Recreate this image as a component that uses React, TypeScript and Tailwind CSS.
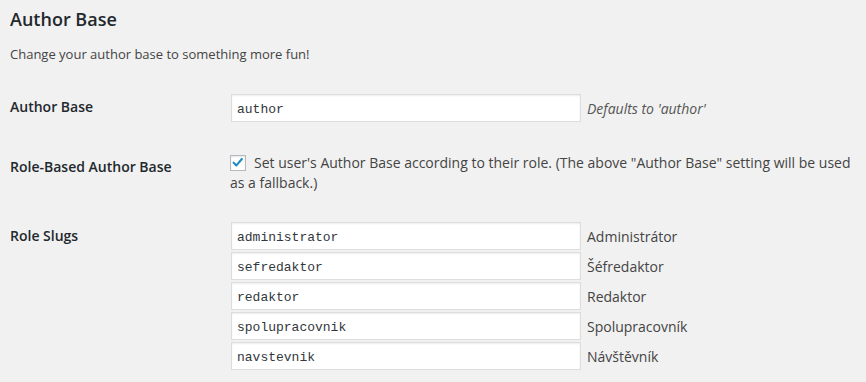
import React from 'react';

const slugs = [
  { slug: 'administrator', label: 'Administrátor' },
  { slug: 'sefredaktor', label: 'Šéfredaktor' },
  { slug: 'redaktor', label: 'Redaktor' },
  { slug: 'spolupracovnik', label: 'Spolupracovník' },
  { slug: 'navstevnik', label: 'Návštěvník' },
];

const TextInput = ({ value }: { value: string }) => (
  <input
    type="text"
    defaultValue={value}
    className="w-[350px] h-[28px] shrink-0 bg-white border border-[#ddd] shadow-[inset_0_1px_2px_rgba(0,0,0,0.07)] px-[5px] pt-[3px] text-[13px] leading-[22px] text-[#32373c] font-['Liberation_Mono',monospace] outline-none"
  />
);

export default function App() {
  return (
    <div className="min-h-[382px] w-full bg-[#f1f1f1] pl-[10px] pr-[10px] pt-[7px] font-['Open_Sans',sans-serif] text-[14px] text-[#444]">
      <h2 className="text-[18px] leading-[24px] font-semibold text-[#23282d]">Author Base</h2>
      <p className="mt-[14px] text-[13px] leading-[19.5px] text-[#444]">Change your author base to something more fun!</p>

      <div className="mt-[29px] flex flex-col">
        {/* Author Base */}
        <div className="flex">
          <div className="w-[221px] shrink-0 pt-[4px] leading-[18.2px] font-semibold text-[#23282d]">Author Base</div>
          <div className="flex h-[28px] items-center gap-[6px]">
            <TextInput value="author" />
            <span className="pt-[2px] leading-[20px] italic text-[#555]">Defaults to 'author'</span>
          </div>
        </div>

        {/* Role-Based Author Base */}
        <div className="mt-[31px] flex">
          <div className="w-[220px] shrink-0 pt-[5px] leading-[18.2px] font-semibold text-[#23282d]">Role-Based Author Base</div>
          <label className="block flex-1 leading-[20px] text-[#444]">
            <span className="inline-block align-[-3px] w-[16px] h-[16px] mr-[8px] bg-white border border-[#b4b9be] shadow-[inset_0_1px_2px_rgba(0,0,0,0.1)] relative">
              <svg viewBox="0 0 16 16" className="absolute left-[0px] top-[0px] w-[14px] h-[14px]">
                <path d="M3 7.6 L6.2 10.8 L12.4 3.4" fill="none" stroke="#1e8cbe" strokeWidth="2.4" strokeLinecap="round" strokeLinejoin="round" />
              </svg>
            </span>
            Set user's Author Base according to their role. (The above "Author Base" setting will be used as a fallback.)
          </label>
        </div>

        {/* Role Slugs */}
        <div className="mt-[29px] flex">
          <div className="w-[221px] shrink-0 pt-[5px] leading-[18.2px] font-semibold text-[#23282d]">Role Slugs</div>
          <div className="flex flex-col gap-[2px]">
            {slugs.map(s => (
              <div key={s.slug} className="flex h-[28px] items-center gap-[6px]">
                <TextInput value={s.slug} />
                <span className="pt-[3px] leading-[20px] text-[#444]">{s.label}</span>
              </div>
            ))}
          </div>
        </div>
      </div>
    </div>
  );
}
